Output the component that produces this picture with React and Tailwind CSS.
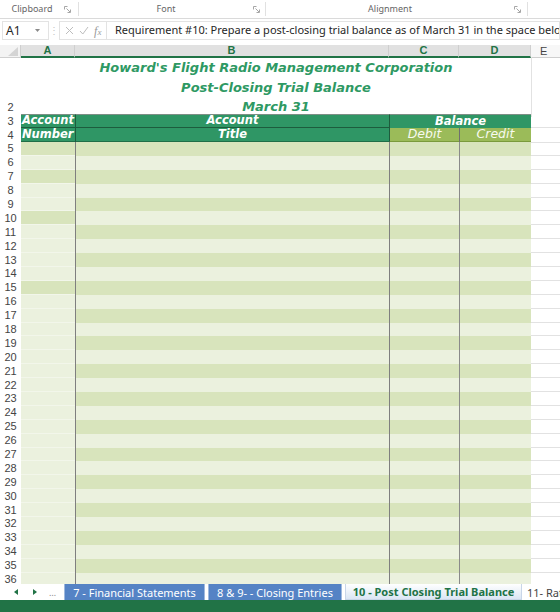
import React from "react";

const GRID = "grid grid-cols-[21px_54px_314px_70px_72px_29px]";
const aDark = new Set([5, 7, 10, 15]);
const bodyRows = Array.from({ length: 33 }, (_, i) => i + 5);

function Launcher() {
  return (
    <svg width="7" height="7" viewBox="0 0 7 7" className="shrink-0">
      <path d="M0.5 3.5V0.5H3.5" stroke="#a6a6a6" fill="none" strokeWidth="1" />
      <path d="M2.5 2.5L6 6M6.5 3.5V6.5H3.5" stroke="#a6a6a6" fill="none" strokeWidth="1" />
    </svg>
  );
}

function RibbonLabels() {
  return (
    <div className="flex h-[19px] border-b border-[#dadada] bg-white text-[9px] text-[#666] font-['Noto_Sans',sans-serif]">
      <div className="flex w-[78px] items-center pr-[7px]">
        <span className="flex-1 text-center">Clipboard</span>
        <Launcher />
      </div>
      <div className="my-[2px] w-px bg-[#e1e1e1]" />
      <div className="flex w-[186px] items-center pr-[5px]">
        <span className="flex-1 text-center">Font</span>
        <Launcher />
      </div>
      <div className="my-[2px] w-px bg-[#e1e1e1]" />
      <div className="flex w-[261px] items-center pr-[6px]">
        <span className="flex-1 text-center">Alignment</span>
        <Launcher />
      </div>
      <div className="my-[2px] w-px bg-[#e1e1e1]" />
      <div className="flex-1" />
    </div>
  );
}

function FormulaBar() {
  return (
    <div className="flex h-[26px] items-start bg-white pt-[2px] font-['Noto_Sans',sans-serif]">
      <div className="ml-[2px] flex h-[19px] w-[47px] items-center border border-[#e3e3e3] pl-[3px] text-[12px] text-[#262626]">
        <span className="flex-1">A1</span>
        <svg width="5" height="3" viewBox="0 0 5 3" className="mr-[8px]">
          <path d="M0 0H5L2.5 3Z" fill="#8a8a8a" />
        </svg>
      </div>
      <div className="flex h-[19px] w-[10px] items-center justify-center text-[10px] text-[#c6c6c6]">⋮</div>
      <div className="flex h-[19px] w-[48px] items-center justify-around border border-[#e3e3e3] px-[2px] text-[#bdbdbd]">
        <svg width="9" height="9" viewBox="0 0 9 9">
          <path d="M1 1L8 8M8 1L1 8" stroke="#bdbdbd" strokeWidth="1" />
        </svg>
        <svg width="10" height="9" viewBox="0 0 10 9">
          <path d="M1 5L3.8 8L9 1" stroke="#bdbdbd" strokeWidth="1" fill="none" />
        </svg>
        <span className="font-['Liberation_Serif',serif] text-[12px] italic leading-none text-[#9a9a9a]">
          f<span className="text-[9px]">x</span>
        </span>
      </div>
      <div className="flex h-[19px] flex-1 items-center overflow-hidden whitespace-nowrap border border-l-0 border-[#e3e3e3] pl-[8px] text-[11px] text-[#262626]">
        Requirement #10: Prepare a post-closing trial balance as of March 31 in the space below
      </div>
    </div>
  );
}

function ColumnHeaders() {
  const sel = "flex items-center justify-center border-r border-[#cfcfcf] border-b-2 border-b-[#217346] bg-[#e1e1e1] text-[11px] font-bold text-[#217346]";
  return (
    <div className={`${GRID} h-[12px] font-['Liberation_Sans',sans-serif] leading-none`}>
      <div className="relative border-r border-b border-[#cfcfcf] bg-[#f3f3f3]">
        <svg width="10" height="9" viewBox="0 0 10 9" className="absolute bottom-[1px] right-[2px]">
          <path d="M10 0V9H0Z" fill="#d4d4d4" />
        </svg>
      </div>
      <div className={sel}>A</div>
      <div className={sel}>B</div>
      <div className={sel}>C</div>
      <div className={sel}>D</div>
      <div className="flex items-center border-b border-[#cfcfcf] bg-[#f7f7f7] pl-[9px] text-[11px] text-[#444]">E</div>
    </div>
  );
}

function RowNum({ n, className = "" }) {
  return (
    <div className={`flex items-center justify-center font-['Liberation_Sans',sans-serif] text-[11px] leading-none text-[#444] ${className}`}>
      {n}
    </div>
  );
}

function TitleBlock() {
  return (
    <div className={`${GRID} h-[57px]`}>
      <div className="flex flex-col">
        <div className="h-[43px]" />
        <RowNum n="2" className="h-[14px]" />
      </div>
      <div className="col-span-4 flex flex-col items-center pt-[1px] font-['DejaVu_Sans',sans-serif] text-[13px] font-bold italic leading-[19.5px] text-[#2e9963]">
        <div>Howard&apos;s Flight Radio Management Corporation</div>
        <div>Post-Closing Trial Balance</div>
        <div>March 31</div>
      </div>
      <div className="border-l border-[#e2e2e2]" />
    </div>
  );
}

function HeaderRows() {
  const hb = "flex items-center font-['DejaVu_Sans',sans-serif] text-[11.5px] font-bold italic leading-none text-white";
  return (
    <div>
      <div className={`${GRID} h-[14px]`}>
        <RowNum n="3" />
        <div className={`${hb} border-t border-b border-[#7d8f86] border-b-[#1d5c3d] bg-[#2f9665] pl-[1px]`}>Account</div>
        <div className={`${hb} justify-center border-t border-b border-l border-[#7d8f86] border-b-[#1d5c3d] border-l-[#1d5c3d] bg-[#2f9665]`}>Account</div>
        <div className={`${hb} col-span-2 justify-center border-t border-l border-[#7d8f86] border-l-[#1d5c3d] bg-[#2f9665]`}>Balance</div>
        <div className="border-b border-[#e2e2e2]" />
      </div>
      <div className={`${GRID} h-[14px]`}>
        <RowNum n="4" />
        <div className={`${hb} border-b-2 border-[#1f6e47] bg-[#2f9665] pl-[1px]`}>Number</div>
        <div className={`${hb} justify-center border-b-2 border-l border-[#1f6e47] border-l-[#1d5c3d] bg-[#2f9665]`}>Title</div>
        <div className="flex items-center justify-center border-b-2 border-l border-[#7a9a3c] border-l-[#1d5c3d] bg-[#9bbb59] font-['DejaVu_Sans',sans-serif] text-[12.5px] italic leading-none text-[#f7faef]">Debit</div>
        <div className="flex items-center justify-center border-b-2 border-l border-[#7a9a3c] border-l-[#6f6f6f] bg-[#9bbb59] font-['DejaVu_Sans',sans-serif] text-[12.5px] italic leading-none text-[#f7faef]">Credit</div>
        <div className="border-b border-[#e2e2e2]" />
      </div>
    </div>
  );
}

function BodyRow({ n }) {
  const stripe = n % 2 === 1 ? "bg-[#d8e4bc]" : "bg-[#ebf1de]";
  const aStripe = aDark.has(n) ? "bg-[#d8e4bc]" : "bg-[#ebf1de]";
  return (
    <div className={`${GRID} h-[13.9px] shrink-0`}>
      <RowNum n={n} />
      <div className={`${aStripe} border-b border-[#f2f6ea]`} />
      <div className={`${stripe} border-l border-[#7f7f7f]`} />
      <div className={`${stripe} border-l border-[#7f7f7f]`} />
      <div className={`${stripe} border-l border-[#8a8a8a]`} />
      <div className="border-b border-[#e2e2e2]" />
    </div>
  );
}

function SheetTabs() {
  return (
    <div className="flex h-[16px] bg-white font-['Noto_Sans',sans-serif] text-[11px] leading-none">
      <div className="flex w-[64px] items-center">
        <svg width="4" height="6" viewBox="0 0 4 6" className="ml-[14px]">
          <path d="M4 0V6L0 3Z" fill="#217346" />
        </svg>
        <svg width="4" height="6" viewBox="0 0 4 6" className="ml-[15px]">
          <path d="M0 0V6L4 3Z" fill="#217346" />
        </svg>
        <span className="ml-[12px] text-[9px] text-[#8a8a8a]">…</span>
      </div>
      <div className="flex w-[141px] items-center justify-center border-x border-[#9fb9de] bg-[#5583c5] text-white">
        7 - Financial Statements
      </div>
      <div className="w-[3px]" />
      <div className="flex w-[134px] items-center justify-center border-x border-[#9fb9de] bg-[#5583c5] text-white">
        8 &amp; 9- - Closing Entries
      </div>
      <div className="w-[3px]" />
      <div className="flex w-[177px] items-center justify-center border border-t-0 border-[#c9d6e8] bg-gradient-to-b from-white to-[#dbe6f4] font-bold text-[#217346]">
        10 - Post Closing Trial Balance
      </div>
      <div className="flex flex-1 items-center overflow-hidden whitespace-nowrap pl-[5px] text-[#444]">
        11- Ratios
      </div>
    </div>
  );
}

export default function App() {
  return (
    <div className="flex h-[612px] w-[560px] flex-col overflow-hidden bg-white">
      <RibbonLabels />
      <FormulaBar />
      <ColumnHeaders />
      <div className="flex h-[527px] flex-col overflow-hidden">
        <TitleBlock />
        <HeaderRows />
        {bodyRows.map((n) => (
          <BodyRow key={n} n={n} />
        ))}
      </div>
      <SheetTabs />
      <div className="h-[12px] bg-[#217346]" />
    </div>
  );
}
